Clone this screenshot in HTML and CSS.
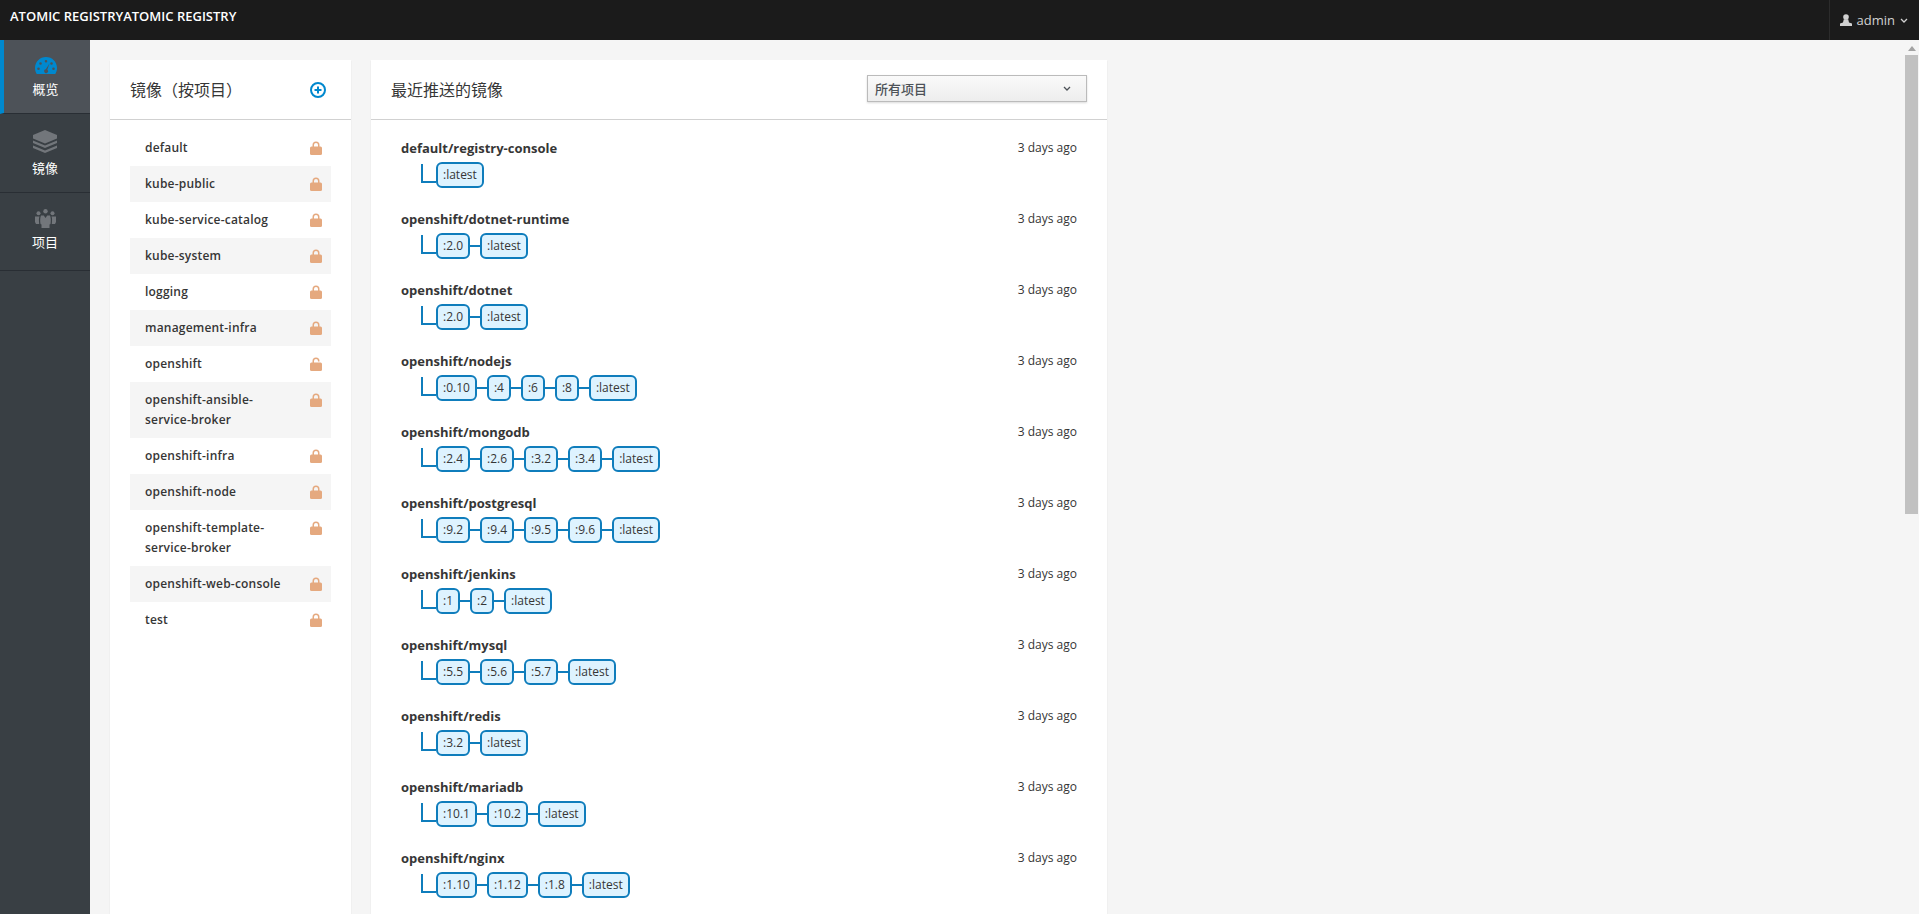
FILE: index.html
```html
<!DOCTYPE html>
<html>
  <head>
    <meta charset="utf-8">
    <title>Atomic Registry</title>
    <link rel="stylesheet" href="styles.css">
  </head>
  <body>
    <header class="topbar">
      <div class="brand">ATOMIC REGISTRYATOMIC REGISTRY</div>
      <div class="user-menu">
        <svg class="user-icon" viewBox="0 0 12 12"><circle cx="6" cy="3" r="2.8"/><path d="M3.8 5.2h4.4L9 8.5l3 1V12H0V9.500l3-1z"/></svg>
        <span>admin</span>
        <svg class="chevron" viewBox="0 0 8 5"><path d="M1 1l3 3 3-3"/></svg>
      </div>
    </header>

    <div class="layout">
      <nav class="sidebar">
        <a class="nav-item active">
          <svg class="nav-icon gauge" viewBox="0 0 22 17"><path fill-rule="evenodd" d="M11 0C4.900 0 0 4.900 0 11c0 2.200.6 4.200 1.700 6h18.600c1.100-1.800 1.700-3.800 1.700-6C22 4.900 17.100 0 11 0zM11 3a1.300 1.300 0 1 1 0 2.600A1.300 1.300 0 0 1 11 3zM5.500 5.200a1.300 1.300 0 1 1 0 2.600 1.300 1.300 0 0 1 0-2.600zM16.500 5.200a1.300 1.300 0 1 1 0 2.600 1.300 1.300 0 0 1 0-2.600zM3.500 10.500a1.300 1.300 0 1 1 0 2.600 1.300 1.300 0 0 1 0-2.600zM18.500 10.500a1.300 1.300 0 1 1 0 2.600 1.300 1.300 0 0 1 0-2.600zM14.500 6.500l-2.200 6.200a1.900 1.900 0 1 1-1.500-.4z"/></svg>
          <span>概览</span>
        </a>
        <a class="nav-item images">
          <svg class="nav-icon" viewBox="0 0 24 23"><path d="M12 0l12 5v3.500l-12 5-12-5V5z"/><path d="M0 10.500l12 5 12-5v2.500l-12 5-12-5z"/><path d="M0 15.500l12 5 12-5V18l-12 5-12-5z"/></svg>
          <span>镜像</span>
        </a>
        <a class="nav-item projects">
          <svg class="nav-icon" viewBox="0 0 21 19"><circle cx="10.500" cy="2.200" r="2.200"/><circle cx="3.500" cy="4.200" r="2"/><circle cx="17.500" cy="4.200" r="2"/><path d="M0 7.500h4.500C3.800 9 3.800 11 4.200 15H1L0 13zM21 7.500h-4.500c.7 1.500.7 3.500.3 7.500H20l1-2z"/><path d="M6 6.500h2.800l1.700 2.500 1.700-2.500H15c1 2 1 5.500.500 8.500l-1 .6V19h-8v-3.400l-1-.6C5 12 5 8.500 6 6.500z"/></svg>
          <span>项目</span>
        </a>
      </nav>

      <main class="content">
        <section class="card projects-card">
          <div class="card-header">
            <h2>镜像（按项目）</h2>
            <svg class="add-icon" viewBox="0 0 16 16"><circle cx="8" cy="8" r="7"/><path d="M8 4.500v7M4.500 8h7"/></svg>
          </div>
          <ul class="project-list">
            <li><span>default</span><svg class="lock" viewBox="0 0 12 14"><path d="M2.500 6V4a3.500 3.500 0 0 1 7 0v2H8V4a2 2 0 0 0-4 0v2z"/><rect y="5.500" width="12" height="8.500" rx="1.500"/></svg></li>
            <li><span>kube-public</span><svg class="lock" viewBox="0 0 12 14"><path d="M2.500 6V4a3.500 3.500 0 0 1 7 0v2H8V4a2 2 0 0 0-4 0v2z"/><rect y="5.500" width="12" height="8.500" rx="1.500"/></svg></li>
            <li><span>kube-service-catalog</span><svg class="lock" viewBox="0 0 12 14"><path d="M2.500 6V4a3.500 3.500 0 0 1 7 0v2H8V4a2 2 0 0 0-4 0v2z"/><rect y="5.500" width="12" height="8.500" rx="1.500"/></svg></li>
            <li><span>kube-system</span><svg class="lock" viewBox="0 0 12 14"><path d="M2.500 6V4a3.500 3.500 0 0 1 7 0v2H8V4a2 2 0 0 0-4 0v2z"/><rect y="5.500" width="12" height="8.500" rx="1.500"/></svg></li>
            <li><span>logging</span><svg class="lock" viewBox="0 0 12 14"><path d="M2.500 6V4a3.500 3.500 0 0 1 7 0v2H8V4a2 2 0 0 0-4 0v2z"/><rect y="5.500" width="12" height="8.500" rx="1.500"/></svg></li>
            <li><span>management-infra</span><svg class="lock" viewBox="0 0 12 14"><path d="M2.500 6V4a3.500 3.500 0 0 1 7 0v2H8V4a2 2 0 0 0-4 0v2z"/><rect y="5.500" width="12" height="8.500" rx="1.500"/></svg></li>
            <li><span>openshift</span><svg class="lock" viewBox="0 0 12 14"><path d="M2.500 6V4a3.500 3.500 0 0 1 7 0v.6H8V4a2 2 0 0 0-4 0v2z"/><rect y="5.500" width="12" height="8.500" rx="1.500"/></svg></li>
            <li><span>openshift-ansible-service-broker</span><svg class="lock" viewBox="0 0 12 14"><path d="M2.500 6V4a3.500 3.500 0 0 1 7 0v2H8V4a2 2 0 0 0-4 0v2z"/><rect y="5.500" width="12" height="8.500" rx="1.500"/></svg></li>
            <li><span>openshift-infra</span><svg class="lock" viewBox="0 0 12 14"><path d="M2.500 6V4a3.500 3.500 0 0 1 7 0v2H8V4a2 2 0 0 0-4 0v2z"/><rect y="5.500" width="12" height="8.500" rx="1.500"/></svg></li>
            <li><span>openshift-node</span><svg class="lock" viewBox="0 0 12 14"><path d="M2.500 6V4a3.500 3.500 0 0 1 7 0v2H8V4a2 2 0 0 0-4 0v2z"/><rect y="5.500" width="12" height="8.500" rx="1.500"/></svg></li>
            <li><span>openshift-template-service-broker</span><svg class="lock" viewBox="0 0 12 14"><path d="M2.500 6V4a3.500 3.500 0 0 1 7 0v2H8V4a2 2 0 0 0-4 0v2z"/><rect y="5.500" width="12" height="8.500" rx="1.500"/></svg></li>
            <li><span>openshift-web-console</span><svg class="lock" viewBox="0 0 12 14"><path d="M2.500 6V4a3.500 3.500 0 0 1 7 0v2H8V4a2 2 0 0 0-4 0v2z"/><rect y="5.500" width="12" height="8.500" rx="1.500"/></svg></li>
            <li><span>test</span><svg class="lock" viewBox="0 0 12 14"><path d="M2.500 6V4a3.500 3.500 0 0 1 7 0v2H8V4a2 2 0 0 0-4 0v2z"/><rect y="5.500" width="12" height="8.500" rx="1.500"/></svg></li>
          </ul>
        </section>

        <section class="card images-card">
          <div class="card-header">
            <h2>最近推送的镜像</h2>
            <div class="project-select">
              <span>所有项目</span>
              <svg class="chevron" viewBox="0 0 8 5"><path d="M1 1l3 3 3-3"/></svg>
            </div>
          </div>
          <div class="repo-list">
            <div class="repo">
              <div class="repo-head"><b>default/registry-console</b><span>3 days ago</span></div>
              <div class="tags"><i class="elbow"></i><a class="tag">:latest</a></div>
            </div>
            <div class="repo">
              <div class="repo-head"><b>openshift/dotnet-runtime</b><span>3 days ago</span></div>
              <div class="tags"><i class="elbow"></i><a class="tag">:2.0</a><i class="link"></i><a class="tag">:latest</a></div>
            </div>
            <div class="repo">
              <div class="repo-head"><b>openshift/dotnet</b><span>3 days ago</span></div>
              <div class="tags"><i class="elbow"></i><a class="tag">:2.0</a><i class="link"></i><a class="tag">:latest</a></div>
            </div>
            <div class="repo">
              <div class="repo-head"><b>openshift/nodejs</b><span>3 days ago</span></div>
              <div class="tags"><i class="elbow"></i><a class="tag">:0.10</a><i class="link"></i><a class="tag">:4</a><i class="link"></i><a class="tag">:6</a><i class="link"></i><a class="tag">:8</a><i class="link"></i><a class="tag">:latest</a></div>
            </div>
            <div class="repo">
              <div class="repo-head"><b>openshift/mongodb</b><span>3 days ago</span></div>
              <div class="tags"><i class="elbow"></i><a class="tag">:2.4</a><i class="link"></i><a class="tag">:2.6</a><i class="link"></i><a class="tag">:3.2</a><i class="link"></i><a class="tag">:3.4</a><i class="link"></i><a class="tag">:latest</a></div>
            </div>
            <div class="repo">
              <div class="repo-head"><b>openshift/postgresql</b><span>3 days ago</span></div>
              <div class="tags"><i class="elbow"></i><a class="tag">:9.2</a><i class="link"></i><a class="tag">:9.4</a><i class="link"></i><a class="tag">:9.5</a><i class="link"></i><a class="tag">:9.6</a><i class="link"></i><a class="tag">:latest</a></div>
            </div>
            <div class="repo">
              <div class="repo-head"><b>openshift/jenkins</b><span>3 days ago</span></div>
              <div class="tags"><i class="elbow"></i><a class="tag">:1</a><i class="link"></i><a class="tag">:2</a><i class="link"></i><a class="tag">:latest</a></div>
            </div>
            <div class="repo">
              <div class="repo-head"><b>openshift/mysql</b><span>3 days ago</span></div>
              <div class="tags"><i class="elbow"></i><a class="tag">:5.5</a><i class="link"></i><a class="tag">:5.6</a><i class="link"></i><a class="tag">:5.7</a><i class="link"></i><a class="tag">:latest</a></div>
            </div>
            <div class="repo">
              <div class="repo-head"><b>openshift/redis</b><span>3 days ago</span></div>
              <div class="tags"><i class="elbow"></i><a class="tag">:3.2</a><i class="link"></i><a class="tag">:latest</a></div>
            </div>
            <div class="repo">
              <div class="repo-head"><b>openshift/mariadb</b><span>3 days ago</span></div>
              <div class="tags"><i class="elbow"></i><a class="tag">:10.1</a><i class="link"></i><a class="tag">:10.2</a><i class="link"></i><a class="tag">:latest</a></div>
            </div>
            <div class="repo">
              <div class="repo-head"><b>openshift/nginx</b><span>3 days ago</span></div>
              <div class="tags"><i class="elbow"></i><a class="tag">:1.10</a><i class="link"></i><a class="tag">:1.12</a><i class="link"></i><a class="tag">:1.8</a><i class="link"></i><a class="tag">:latest</a></div>
            </div>
          </div>
        </section>
      </main>

      <div class="scrollbar">
        <div class="scroll-arrow"></div>
        <div class="scroll-thumb"></div>
      </div>
    </div>
  </body>
</html>
```

FILE: styles.css
```css
* {
  box-sizing: border-box;
}

html,
body {
  height: 100%;
}

body {
  display: flex;
  flex-direction: column;
  margin: 0;
  overflow: hidden;
  background-color: #f5f5f5;
  color: #363636;
  font-family: "Open Sans", "Noto Sans CJK SC", sans-serif;
  font-size: 12px;
}

.topbar {
  display: flex;
  justify-content: space-between;
  flex: 0 0 40px;
  background-color: #1b1b1b;
  color: #fff;
}

.brand {
  padding: 6px 10px;
  font-size: 13px;
  font-weight: 600;
  line-height: 20px;
}

.user-menu {
  display: flex;
  align-items: center;
  padding: 0 11px 0 10px;
  border-left: 1px solid #2c2c2c;
  color: #d1d1d1;
  font-size: 13px;
}

.user-icon {
  width: 12px;
  height: 12px;
  margin-right: 5px;
  fill: #d1d1d1;
}

.chevron {
  width: 8px;
  height: 5px;
  margin-left: 5px;
  fill: none;
  stroke: currentColor;
  stroke-width: 1.300;
}

.layout {
  display: flex;
  flex: 1;
  min-height: 0;
}

.sidebar {
  flex: 0 0 90px;
  background-color: #393f44;
}

.nav-item {
  display: flex;
  flex-direction: column;
  align-items: center;
  height: 78.500px;
  padding-top: 16px;
  border-bottom: 1px solid #292e34;
  color: #fff;
  font-size: 13px;
  line-height: 18px;
}

.nav-item.active {
  height: 74px;
  padding-top: 17px;
  border-left: 4px solid #0088ce;
  background-color: #4d5258;
}

.nav-item.active span {
  margin-left: -3px;
  margin-top: 6px;
}

.nav-item span {
  margin-top: 6px;
}

.nav-icon {
  width: 24px;
  height: 23px;
  fill: #72767b;
}

.nav-icon.gauge {
  width: 22px;
  height: 17px;
  margin-left: -3px;
  fill: #0088ce;
}

.projects .nav-icon {
  width: 21px;
  height: 19px;
}

.projects span {
  margin-top: 5px;
}

.content {
  display: flex;
  align-items: stretch;
  gap: 20px;
  flex: 1;
  min-width: 0;
  padding: 20px 0 0 20px;
}

.card {
  background-color: #fff;
  box-shadow: 0 1px 1px rgba(3, 3, 3, 0.12);
}

.projects-card {
  flex: 0 0 241px;
}

.images-card {
  flex: 0 0 736px;
}

.card-header {
  display: flex;
  justify-content: space-between;
  align-items: center;
  height: 60px;
  padding: 0 20px;
  border-bottom: 1px solid #d1d1d1;
}

.card-header h2 {
  margin: 0;
  color: #363636;
  font-size: 16px;
  font-weight: 400;
  line-height: 20px;
}

.projects-card .card-header h2 {
  margin-right: auto;
}

.add-icon {
  width: 16px;
  height: 16px;
  margin-right: 5px;
  fill: none;
  stroke: #0088ce;
  stroke-width: 2;
}

.project-list {
  margin: 10px 20px 0;
  padding: 0;
  list-style: none;
}

.project-list li {
  display: flex;
  justify-content: space-between;
  align-items: flex-start;
  padding: 8px 9px 8px 15px;
  font-weight: 600;
  line-height: 20px;
  letter-spacing: 0.2px;
}

.project-list li:nth-child(even) {
  background-color: #f5f5f5;
}

.project-list li span {
  width: 145px;
}

.lock {
  width: 12px;
  height: 14px;
  margin-top: 3px;
  fill: #e5a97f;
}

.project-select {
  display: flex;
  justify-content: space-between;
  align-items: center;
  width: 220px;
  height: 27px;
  margin-bottom: 2px;
  padding: 0 15px 0 7px;
  border: 1px solid #bbb;
  background-image: linear-gradient(#fafafa, #ededed);
  box-shadow: 0 1px 2px rgba(3, 3, 3, 0.15);
  color: #4d5258;
  font-size: 13px;
  font-weight: 500;
}

.repo-list {
  padding: 18px 30px 0;
}

.repo {
  margin-bottom: 21px;
}

.repo-head {
  display: flex;
  justify-content: space-between;
  line-height: 20px;
}

.repo-head b {
  font-size: 13px;
  font-weight: 700;
}

.tags {
  display: flex;
  align-items: center;
  height: 26px;
  margin-top: 4px;
}

.elbow {
  width: 15px;
  height: 19px;
  margin: -4px 0 0 20px;
  border-bottom: 2px solid #0f7dbc;
  border-left: 2px solid #0f7dbc;
}

.tag {
  height: 26px;
  padding: 0 5px;
  border: 2px solid #0f7dbc;
  border-radius: 6px;
  background-color: #def3ff;
  line-height: 22px;
}

.link {
  width: 10px;
  height: 2px;
  background-color: #0f7dbc;
}

.scrollbar {
  display: flex;
  flex-direction: column;
  align-items: center;
  flex: 0 0 13px;
  margin-right: 1px;
}

.scroll-arrow {
  margin: 6px 0 4px;
  border-right: 4px solid transparent;
  border-bottom: 5px solid #a3a3a3;
  border-left: 4px solid transparent;
}

.scroll-thumb {
  width: 100%;
  height: 459px;
  background-color: #c1c1c1;
}
```
